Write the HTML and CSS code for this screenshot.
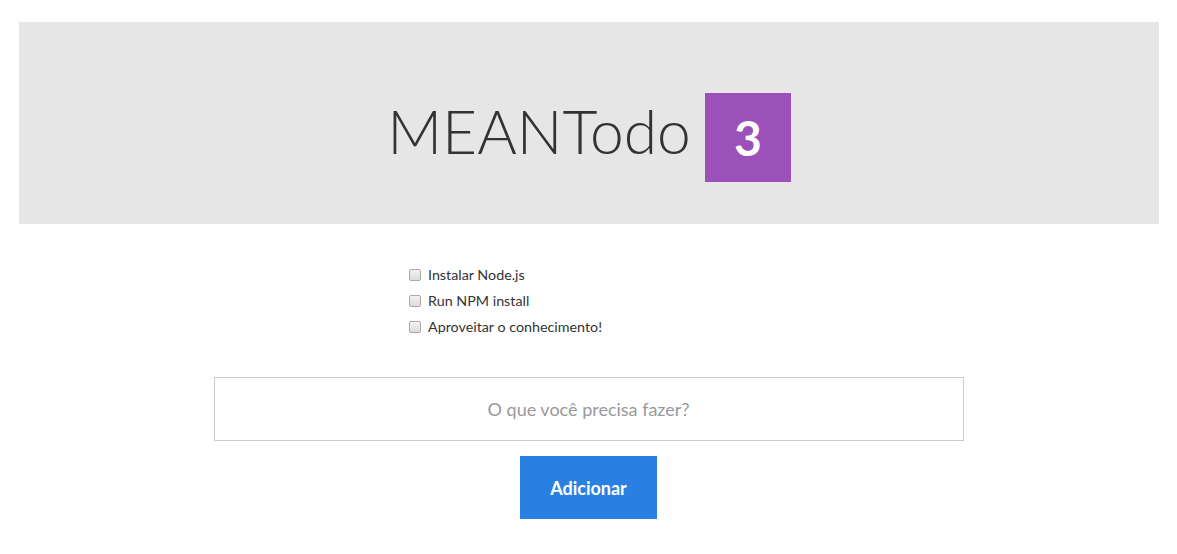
FILE: index.html
```html
<!DOCTYPE html>
<html lang="pt">
<head>
<meta charset="utf-8">
<title>MEANTodo</title>
<link rel="stylesheet" href="styles.css">
</head>
<body>
<header class="jumbotron">
  <h1 class="title">MEANTodo <span class="badge">3</span></h1>
</header>
<main class="content">
  <ul class="todos">
    <li class="todo"><label><input type="checkbox" class="check"> Instalar Node.js</label></li>
    <li class="todo"><label><input type="checkbox" class="check"> Run NPM install</label></li>
    <li class="todo"><label><input type="checkbox" class="check"> Aproveitar o conhecimento!</label></li>
  </ul>
  <form class="add-form">
    <input type="text" class="new-todo" placeholder="O que você precisa fazer?">
    <button type="button" class="btn">Adicionar</button>
  </form>
</main>
</body>
</html>
```
FILE: styles.css
```css
html, body {
  margin: 0;
  padding: 0;
  background: #fff;
  font-family: "Lato", "Liberation Sans", sans-serif;
  color: #333;
}
.jumbotron {
  box-sizing: border-box;
  margin: 22px 18px 0 19px;
  height: 202px;
  padding-top: 14px;
  background: #e6e6e6;
  display: flex;
  align-items: center;
  justify-content: center;
}
.title {
  margin: 0;
  display: flex;
  align-items: center;
  gap: 14px;
  font-weight: 300;
  font-size: 60.5px;
  color: #333;
}
.badge {
  margin-top: 14px;
  width: 86px;
  height: 89px;
  background: #9b50ba;
  color: #fff;
  font-family: "Lato", sans-serif;
  font-weight: 700;
  font-size: 48px;
  display: flex;
  align-items: center;
  justify-content: center;
}
.content {
  display: flex;
  flex-direction: column;
  align-items: center;
}
.todos {
  list-style: none;
  margin: 42px 0 0 0;
  padding: 0 0 0 409px;
  align-self: stretch;
}
.todo {
  height: 26px;
  font-size: 14.3px;
  color: #333;
}
.todo label {
  display: flex;
  align-items: center;
  gap: 7px;
}
.check {
  appearance: none;
  -webkit-appearance: none;
  box-sizing: border-box;
  margin: 0;
  width: 12px;
  height: 12px;
  border: 1px solid #a9a9a9;
  border-radius: 2px;
  background: linear-gradient(#f2f2f2, #dcdcdc);
}
.check:checked {
  background: #2a80e2;
  border-color: #2a80e2;
}
.add-form {
  margin-top: 33px;
  display: flex;
  flex-direction: column;
  align-items: center;
  gap: 15px;
}
.new-todo {
  box-sizing: border-box;
  width: 750px;
  height: 64px;
  border: 1px solid #ccc;
  text-align: center;
  font-family: inherit;
  font-size: 18px;
  color: #555;
  outline: none;
}
.new-todo::placeholder {
  color: #999;
}
.btn {
  width: 137px;
  height: 63px;
  border: none;
  background: #2a80e2;
  color: #fff;
  font-family: inherit;
  font-size: 18px;
  font-weight: 700;
}
```
